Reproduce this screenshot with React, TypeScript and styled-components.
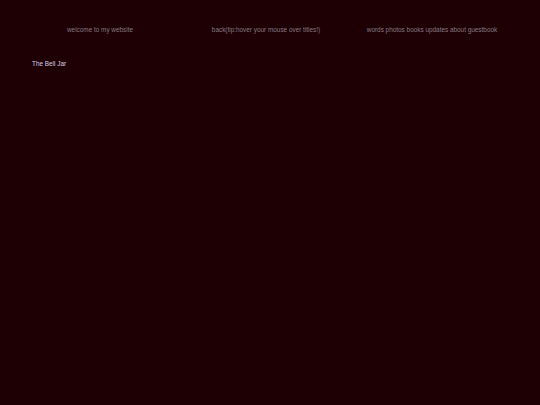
import * as React from 'react';
import styled, { createGlobalStyle } from 'styled-components';

const GlobalStyle = createGlobalStyle`
  html, body {
    margin: 0;
    padding: 0;
    background: #1e0004;
  }
  body {
    font-family: "Liberation Sans", Arial, sans-serif;
    min-height: 405px;
  }
`;

const Page = styled.div`
  display: flex;
  flex-direction: column;
  padding: 25px 0 0 0;
`;

const Nav = styled.nav`
  display: grid;
  grid-template-columns: repeat(3, 166px);
  margin-left: 17px;
`;

const NavItem = styled.div`
  text-align: center;
  font-size: 6.4px;
  line-height: 9px;
  color: #857a82;
`;

const Content = styled.main`
  padding: 25px 0 0 32px;
`;

const BookTitle = styled.div`
  font-size: 6.4px;
  line-height: 9px;
  color: #d6cde0;
`;

export default function App() {
  return (
    <>
      <GlobalStyle />
      <Page>
        <Nav>
          <NavItem>welcome to my website</NavItem>
          <NavItem>back(tip:hover your mouse over titles!)</NavItem>
          <NavItem>words photos books updates about guestbook</NavItem>
        </Nav>
        <Content>
          <BookTitle>The Bell Jar</BookTitle>
        </Content>
      </Page>
    </>
  );
}
